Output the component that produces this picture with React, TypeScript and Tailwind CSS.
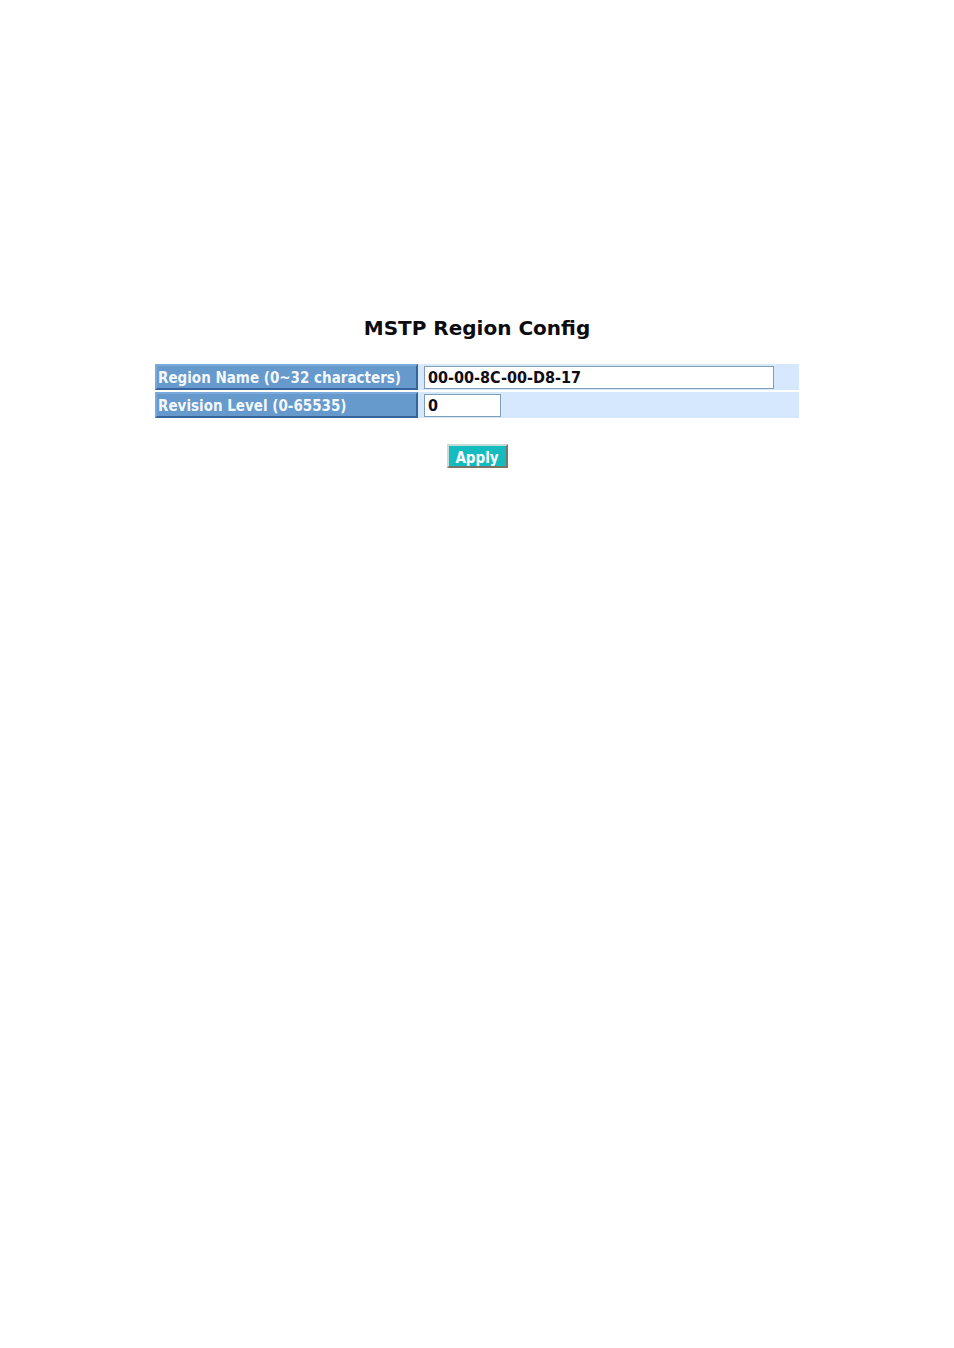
import * as React from 'react';

interface Field {
  id: string;
  label: string;
  value: string;
  inputClass: string;
}

const fields: Field[] = [
  {
    id: 'region-name',
    label: 'Region Name (0~32 characters)',
    value: '00-00-8C-00-D8-17',
    inputClass: 'w-[350px]',
  },
  {
    id: 'revision-level',
    label: 'Revision Level (0-65535)',
    value: '0',
    inputClass: 'w-[77px]',
  },
];

const FieldRow = ({ field }: { field: Field }) => {
  const [value, setValue] = React.useState(field.value);

  return (
    <tr>
      <th
        scope="row"
        className="w-[263px] h-[26px] p-0 pl-px text-left whitespace-nowrap bg-[#6699cc] border-2 border-t-[#7aa9dc] border-l-[#7aa9dc] border-r-[#38649c] border-b-[#38649c] text-[15px] leading-5 font-bold text-[#f4f8fc]"
      >
        <label htmlFor={field.id} className="block pt-0.5">{field.label}</label>
      </th>
      <td className="p-0 pl-1.5 bg-[#d6e8fd]">
        <input
          id={field.id}
          type="text"
          value={value}
          onChange={(e) => setValue(e.target.value)}
          className={`block h-[23px] max-w-full px-[3px] border border-[#7f9db9] bg-white text-base leading-5 font-bold text-[#100c18] outline-none ${field.inputClass}`}
        />
      </td>
    </tr>
  );
};

const App = () => {
  return (
    <main className="min-h-screen bg-white pt-[314px] font-['DejaVu_Sans_Condensed','DejaVu_Sans',sans-serif]">
      <form
        onSubmit={(e) => e.preventDefault()}
        className="mx-auto w-[67.5%] flex flex-col items-center"
      >
        <h1 className="font-['DejaVu_Sans',sans-serif] text-xl leading-7 font-bold text-[#0c0c10]">
          MSTP Region Config
        </h1>

        <table className="mt-5 w-full border-separate border-spacing-x-0 border-spacing-y-0.5">
          <tbody>
            {fields.map((field) => (
              <FieldRow key={field.id} field={field} />
            ))}
          </tbody>
        </table>

        <button
          type="submit"
          className="mt-6 w-[61px] h-6 pt-0.5 bg-[#14bcc0] border-2 border-t-[#c4dcd8] border-l-[#c4dcd8] border-r-[#77756a] border-b-[#77756a] text-[15px] leading-5 font-bold text-white"
        >
          Apply
        </button>
      </form>
    </main>
  );
};

export default App;
